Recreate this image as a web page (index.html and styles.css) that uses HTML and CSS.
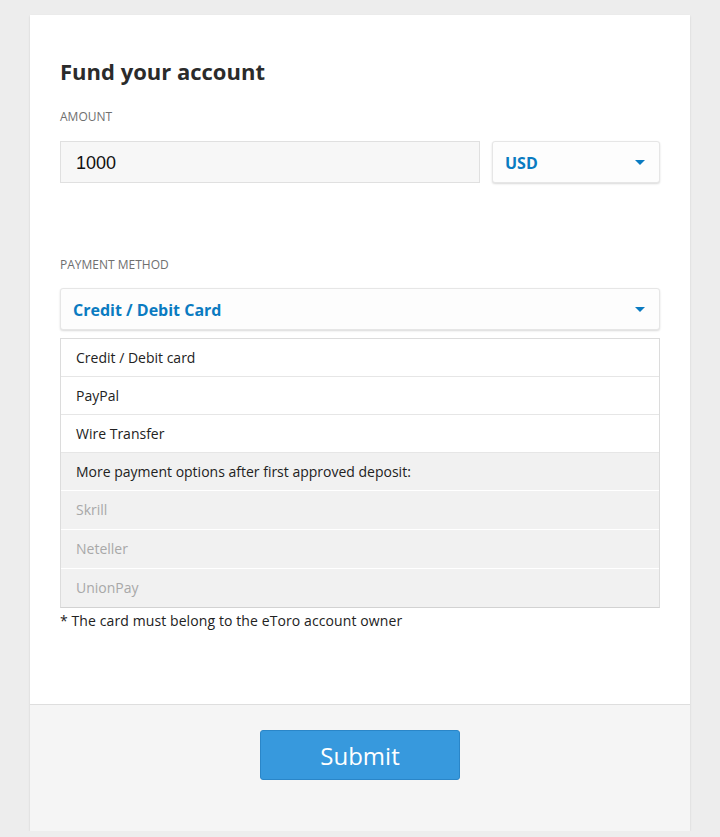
FILE: index.html
```html
<!DOCTYPE html>
<html lang="en">
<head>
<meta charset="UTF-8">
<meta name="viewport" content="width=device-width, initial-scale=1.0">
<title>Fund your account</title>
<link rel="stylesheet" href="styles.css">
</head>
<body>

<div class="card">
  <div class="card-body">
    <h2>Fund your account</h2>

    <div class="field-label">Amount</div>
    <div class="amount-row">
      <div class="amount-input">1000</div>
      <div class="select currency">
        <span>USD</span>
        <span class="caret"></span>
      </div>
    </div>

    <div class="field-label method-label">Payment method</div>
    <div class="select">
      <span>Credit / Debit Card</span>
      <span class="caret"></span>
    </div>

    <ul class="options">
      <li>Credit / Debit card</li>
      <li>PayPal</li>
      <li>Wire Transfer</li>
      <li class="note">More payment options after first approved deposit:</li>
      <li class="disabled">Skrill</li>
      <li class="disabled">Neteller</li>
      <li class="disabled">UnionPay</li>
    </ul>

    <p class="footnote">* The card must belong to the eToro account owner</p>
  </div>

  <div class="card-footer">
    <button class="submit">Submit</button>
  </div>
</div>

</body>
</html>
```

FILE: styles.css
```css
body {
  margin: 0;
  padding: 15px 0 0;
  background: #ededed;
  font-family: 'Open Sans', 'Noto Sans', sans-serif;
  color: #222;
}

.card {
  width: 660px;
  margin: 0 auto;
  background: #fff;
  box-shadow: 0 1px 2px rgba(0, 0, 0, 0.12);
}

.card-body {
  padding: 41px 30px 73px;
}

h2 {
  margin: 0;
  font-size: 22px;
  line-height: 30px;
  font-weight: 700;
  color: #2b2b2b;
}

.field-label {
  margin-top: 23px;
  font-size: 12px;
  line-height: 16px;
  text-transform: uppercase;
  color: #6f6f6f;
}

.method-label {
  margin-top: 74px;
}

.amount-row {
  display: flex;
  gap: 12px;
  margin-top: 16px;
}

.amount-input {
  box-sizing: border-box;
  width: 420px;
  height: 42px;
  padding: 2px 15px 0;
  display: flex;
  align-items: center;
  background: #f7f7f7;
  border: 1px solid #e0e0e0;
  font-family: 'Liberation Sans', Arial, sans-serif;
  font-size: 18px;
  color: #111;
}

.select {
  box-sizing: border-box;
  height: 42px;
  padding: 1px 14px 0 12px;
  display: flex;
  align-items: center;
  justify-content: space-between;
  background: #fdfdfd;
  border: 1px solid #e6e6e6;
  border-radius: 3px;
  box-shadow: 0 1px 2px rgba(0, 0, 0, 0.15);
  font-size: 16px;
  font-weight: 700;
  color: #0a7bc1;
}

.method-label + .select {
  margin-top: 15px;
}

.currency {
  flex: 1;
}

.caret {
  width: 0;
  height: 0;
  border-left: 5px solid transparent;
  border-right: 5px solid transparent;
  border-top: 5px solid #0a7bc1;
}

.options {
  list-style: none;
  margin: 8px 0 0;
  padding: 0;
  border: 1px solid #dcdcdc;
  border-bottom-color: #d2d2d2;
}

.options li {
  height: 37px;
  line-height: 37px;
  padding: 0 15px;
  font-size: 14px;
  color: #222;
  border-bottom: 1px solid #e6e6e6;
}

.options li:last-child {
  border-bottom: none;
}

.options .note,
.options .disabled {
  background: #f1f1f1;
  border-bottom-color: #fff;
}

.options .disabled {
  height: 38px;
  line-height: 38px;
  color: #a8a8a8;
}

.footnote {
  margin: 3px 0 0;
  font-size: 14px;
  line-height: 20px;
  letter-spacing: 0.1px;
  color: #222;
}

.card-footer {
  height: 127px;
  padding-top: 25px;
  box-sizing: border-box;
  text-align: center;
  background: #f5f5f5;
  border-top: 1px solid #dedede;
}

.submit {
  width: 200px;
  height: 50px;
  background: #3799dd;
  color: #fff;
  border: 1px solid #2a86c8;
  border-radius: 3px;
  font-family: 'Open Sans', 'Noto Sans', sans-serif;
  font-size: 24px;
  cursor: pointer;
}
```
